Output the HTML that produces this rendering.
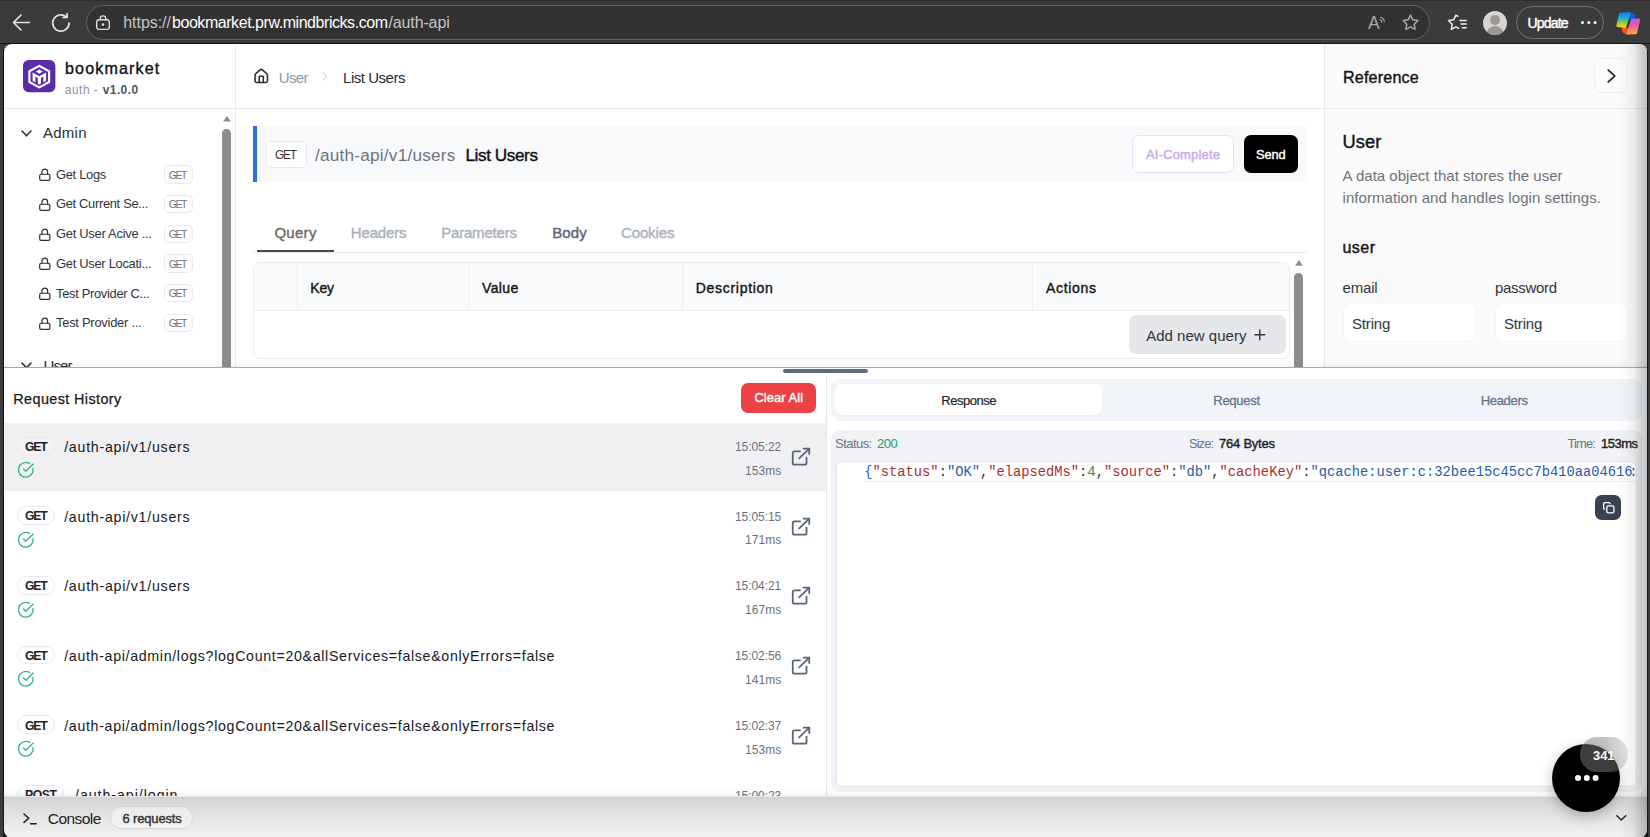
<!DOCTYPE html>
<html lang="en">
<head>
<meta charset="utf-8">
<title>bookmarket auth-api</title>
<style>
*{box-sizing:border-box;margin:0;padding:0}
html,body{width:1650px;height:837px;overflow:hidden;background:#3b3b3b}
body{position:relative;font-family:"Liberation Sans",sans-serif}
.layer{position:absolute;left:0;top:0;width:1650px;height:837px}
.b{position:absolute}
.t{position:absolute;white-space:pre;line-height:1;display:block}
.fs{font-family:"Liberation Sans",sans-serif}
.fm{font-family:"Liberation Mono",monospace}
svg{position:absolute;overflow:visible}
.ic{fill:none;stroke-linecap:round;stroke-linejoin:round}
#upper{clip-path:inset(44px 3px 470px 4px round 8px 8px 0 0)}
#lower{clip-path:inset(367px 3px 41px 4px)}
#bar{clip-path:inset(796.500px 3px -2px 4px round 0 0 10px 10px)}
</style>
</head>
<body>
<!-- ================= browser chrome ================= -->
<div class="layer" id="chrome">
  <div class="b" style="left:0;top:0;width:1650px;height:44px;background:#3b3b3b"></div>
  <div class="b" style="left:0;top:0;width:1650px;height:1.200px;background:#303030"></div>
  <div class="b" style="left:0;top:42.600px;width:1650px;height:1.600px;background:#141414"></div>
  <!-- url pill -->
  <div class="b" style="left:86px;top:5px;width:1344px;height:35px;border-radius:18px;background:#323232;border:1.500px solid #626262"></div>
  <!-- back arrow -->
  <svg class="ic" style="left:12px;top:13px" width="19" height="19" viewBox="0 0 19 19" stroke="#e6e6e6" stroke-width="1.6"><path d="M17.5 9.5H1.5M9 2 1.5 9.5 9 17"/></svg>
  <!-- refresh -->
  <svg class="ic" style="left:49.500px;top:11.800px" width="22" height="22" viewBox="0 0 21 21" stroke="#e6e6e6" stroke-width="1.6"><path d="M18.2 10.5a7.8 7.8 0 1 1-2.6-5.8"/><path d="M16.3 1.6v3.6h-3.6" /></svg>
  <!-- lock -->
  <svg class="ic" style="left:96px;top:14.800px" width="14" height="15" viewBox="0 0 14 15" stroke="#dcdcdc" stroke-width="1.350"><rect x=".7" y="4.700" width="12.600" height="9.600" rx="2.300"/><path d="M4.200 4.700V3.700a2.800 2.800 0 0 1 5.600 0V4.700"/><circle cx="7" cy="9.500" r=".700" fill="#dcdcdc"/></svg>
<span class="t fs" style="left:123.20px;top:15px;font-size:16px;color:#c4c4c4;letter-spacing:-0.033px;">https://</span>
<span class="t fs" style="left:172.00px;top:15px;font-size:16px;color:#ffffff;letter-spacing:-0.447px;">bookmarket.prw.mindbricks.com</span>
<span class="t fs" style="left:388.50px;top:15px;font-size:16px;color:#c4c4c4;letter-spacing:-0.133px;">/auth-api</span>
<span class="t fs" style="left:1527.50px;top:16px;font-size:14px;color:#ffffff;-webkit-text-stroke:0.4px currentColor;letter-spacing:-0.831px;">Update</span>
  <!-- read aloud A -->
  <span class="t fs" style="left:1368px;top:14.500px;font-size:17.500px;color:#a8a8a8">A</span>
  <svg class="ic" style="left:1378.500px;top:15.500px" width="8" height="9.600" viewBox="0 0 10 12" stroke="#a8a8a8" stroke-width="1.300"><path d="M1 4.500a3.500 3.500 0 0 1 2.500 3.200"/><path d="M2 1.500a6.500 6.500 0 0 1 4.700 5.800"/></svg>
  <!-- star -->
  <svg class="ic" style="left:1401px;top:13px" width="19" height="19" viewBox="0 0 24 24" stroke="#a8a8a8" stroke-width="1.900"><path d="M12 2.600l2.900 6 6.500.9-4.700 4.600 1.100 6.500L12 17.500l-5.800 3.100 1.100-6.500L2.600 9.500l6.500-.9z"/></svg>
  <!-- favourites -->
  <svg class="ic" style="left:1447px;top:13px" width="21" height="19" viewBox="0 0 26 24" stroke="#ededed" stroke-width="1.900"><path d="M13.500 4.200 11 2.600 8.100 8.600l-6.500.9 4.700 4.600-1.100 6.500L11 17.500l3.500 1.900"/><path d="M16 9.500h8M17.500 14h6.500M19 18.500h5"/></svg>
  <!-- avatar -->
  <div class="b" style="left:1483px;top:10.500px;width:24px;height:24px;border-radius:12px;background:#d8d4d0;overflow:hidden">
    <div class="b" style="left:7px;top:4px;width:10px;height:10px;border-radius:5px;background:#9b9792"></div>
    <div class="b" style="left:3px;top:15.500px;width:18px;height:14px;border-radius:9px 9px 0 0;background:#9b9792"></div>
  </div>
  <!-- update pill -->
  <div class="b" style="left:1516px;top:6px;width:88px;height:33px;border-radius:17px;border:1.600px solid #717171"></div>
  <div class="b" style="left:1580.500px;top:21px;width:3.200px;height:3.200px;border-radius:2px;background:#fff;box-shadow:6.300px 0 0 #fff,12.600px 0 0 #fff"></div>
  <!-- copilot -->
  <svg style="left:1615.500px;top:11.500px" width="24.650" height="22.950" viewBox="0 0 430 400">
    <defs>
      <linearGradient id="cg1" x1="0" y1="0" x2="0" y2="1"><stop offset="0" stop-color="#1583ee"/><stop offset=".3" stop-color="#1fa4d8"/><stop offset=".6" stop-color="#63c85a"/><stop offset="1" stop-color="#f7d416"/></linearGradient>
      <linearGradient id="cg2" x1="0" y1="0" x2="0" y2="1"><stop offset="0" stop-color="#b45cf5"/><stop offset=".4" stop-color="#f2569f"/><stop offset="1" stop-color="#ffa244"/></linearGradient>
    </defs>
    <g stroke-linejoin="round" stroke-width="44">
      <path d="M236 28 316 62 292 118 246 100z" fill="#0f5fe0" stroke="#0f5fe0"/>
      <path d="M122 296 196 300 196 372 140 352z" fill="#f2542c" stroke="#f2542c"/>
      <path d="M74 34 232 24 158 256 28 240z" fill="url(#cg1)" stroke="url(#cg1)"/>
      <path d="M282 138 400 136 346 366 206 372z" fill="url(#cg2)" stroke="url(#cg2)"/>
    </g>
  </svg>
</div>

<!-- ================= page ================= -->
<div class="b" style="left:1646px;top:50px;width:2px;height:787px;background:#161616"></div>
<div class="b" style="left:3px;top:50px;width:2px;height:787px;background:#161616"></div>
<div class="b" style="left:3px;top:43.500px;width:1645px;height:797px;background:#161616;border-radius:9px 9px 11px 11px"></div>
<div class="b" style="left:4px;top:44px;width:1643px;height:795px;background:#fff;border-radius:8px 8px 10px 10px"></div>

<div class="layer" id="upper">
  <!-- reference panel bg -->
  <div class="b" style="left:1324px;top:44px;width:323px;height:324px;background:#fafafa;border-left:1px solid #e7e8ea"></div>
  <!-- header bottom border -->
  <div class="b" style="left:4px;top:108px;width:1643px;height:1px;background:#e9eaec"></div>
  <!-- sidebar right border -->
  <div class="b" style="left:235px;top:44px;width:1px;height:324px;background:#e9eaec"></div>
  <!-- logo -->
  <svg style="left:22.600px;top:59.700px" width="32.400" height="32.200" viewBox="0 0 32.400 32.200">
    <rect width="32.400" height="32.200" rx="5.600" fill="#5a2ca8"/>
    <path d="M16.250 5.900 26.100 11.300V22L16.250 27.400 6.400 22V11.300z" fill="none" stroke="#fff" stroke-width="2.200" stroke-linejoin="round"/>
    <path d="M9.600 12.500 16.300 16.200 23.100 12.500V20.700L16.300 24.500 9.600 20.700z" fill="#fff"/>
    <path d="M12.400 16.500 14.800 17.900V24.500H12.400zM20.300 16.500 17.900 17.900V24.500H20.300z" fill="#5a2ca8"/>
    <path d="M16.300 9.400 19.800 11.550 16.300 13.700 12.900 11.550z" fill="#fff"/>
  </svg>
  <!-- home icon -->
  <svg class="ic" style="left:253px;top:67.500px" width="16.500" height="16.500" viewBox="0 0 24 24" stroke="#2b2f36" stroke-width="2.300"><path d="M15 21v-8a1 1 0 0 0-1-1h-4a1 1 0 0 0-1 1v8"/><path d="M3 10a2 2 0 0 1 .709-1.528l7-5.999a2 2 0 0 1 2.582 0l7 5.999A2 2 0 0 1 21 10v9a2 2 0 0 1-2 2H5a2 2 0 0 1-2-2z"/></svg>
  <!-- breadcrumb chevron -->
  <svg class="ic" style="left:321.900px;top:72.100px" width="5.800" height="9" viewBox="0 0 6 9" stroke="#dadde2" stroke-width="1.300"><path d="M1 .8 5 4.500 1 8.200"/></svg>
  <!-- reference collapse button -->
  <div class="b" style="left:1593.700px;top:57.800px;width:34.800px;height:35.600px;border-radius:7px;border:1px solid #eeeeef;background:#fbfbfb"></div>
  <svg class="ic" style="left:1606.700px;top:68.900px" width="9" height="14" viewBox="0 0 9 14" stroke="#333" stroke-width="1.700"><path d="M1.200 1 7.800 7 1.200 13"/></svg>

  <!-- sidebar -->
  <svg class="ic" style="left:20.500px;top:129.500px" width="11" height="7" viewBox="0 0 11 7" stroke="#2b2f36" stroke-width="1.600"><path d="M1 1 5.500 5.800 10 1"/></svg>
  <svg class="ic" style="left:20.500px;top:362px" width="11" height="7" viewBox="0 0 11 7" stroke="#2b2f36" stroke-width="1.600"><path d="M1 1 5.500 5.800 10 1"/></svg>
  <svg class="ic" style="left:38.450px;top:168.3px" width="13.600" height="13.600" viewBox="0 0 24 24" stroke="#2b2f36" stroke-width="2.100"><rect width="18" height="11" x="3" y="11" rx="2.500"/><path d="M7 11V7a5 5 0 0 1 10 0v4"/></svg>
  <div class="b" style="left:163.500px;top:165.1px;width:29.200px;height:18.500px;border-radius:5px;border:1px solid #e8eaed;background:#fff"></div>
  <svg class="ic" style="left:38.450px;top:198.0px" width="13.600" height="13.600" viewBox="0 0 24 24" stroke="#2b2f36" stroke-width="2.100"><rect width="18" height="11" x="3" y="11" rx="2.500"/><path d="M7 11V7a5 5 0 0 1 10 0v4"/></svg>
  <div class="b" style="left:163.500px;top:194.8px;width:29.200px;height:18.500px;border-radius:5px;border:1px solid #e8eaed;background:#fff"></div>
  <svg class="ic" style="left:38.450px;top:227.7px" width="13.600" height="13.600" viewBox="0 0 24 24" stroke="#2b2f36" stroke-width="2.100"><rect width="18" height="11" x="3" y="11" rx="2.500"/><path d="M7 11V7a5 5 0 0 1 10 0v4"/></svg>
  <div class="b" style="left:163.500px;top:224.5px;width:29.200px;height:18.500px;border-radius:5px;border:1px solid #e8eaed;background:#fff"></div>
  <svg class="ic" style="left:38.450px;top:257.4px" width="13.600" height="13.600" viewBox="0 0 24 24" stroke="#2b2f36" stroke-width="2.100"><rect width="18" height="11" x="3" y="11" rx="2.500"/><path d="M7 11V7a5 5 0 0 1 10 0v4"/></svg>
  <div class="b" style="left:163.500px;top:254.2px;width:29.200px;height:18.500px;border-radius:5px;border:1px solid #e8eaed;background:#fff"></div>
  <svg class="ic" style="left:38.450px;top:287.1px" width="13.600" height="13.600" viewBox="0 0 24 24" stroke="#2b2f36" stroke-width="2.100"><rect width="18" height="11" x="3" y="11" rx="2.500"/><path d="M7 11V7a5 5 0 0 1 10 0v4"/></svg>
  <div class="b" style="left:163.500px;top:283.9px;width:29.200px;height:18.500px;border-radius:5px;border:1px solid #e8eaed;background:#fff"></div>
  <svg class="ic" style="left:38.450px;top:316.8px" width="13.600" height="13.600" viewBox="0 0 24 24" stroke="#2b2f36" stroke-width="2.100"><rect width="18" height="11" x="3" y="11" rx="2.500"/><path d="M7 11V7a5 5 0 0 1 10 0v4"/></svg>
  <div class="b" style="left:163.500px;top:313.6px;width:29.200px;height:18.500px;border-radius:5px;border:1px solid #e8eaed;background:#fff"></div>
  <!-- sidebar scrollbar -->
  <svg style="left:222.500px;top:115.500px" width="8" height="5.500" viewBox="0 0 8 5.500"><path d="M4 0 8 5.500H0z" fill="#8f8f8f"/></svg>
  <div class="b" style="left:222.300px;top:128.500px;width:8.500px;height:250px;border-radius:4.250px;background:#8d8d8d"></div>

  <!-- request bar -->
  <div class="b" style="left:253px;top:126px;width:1054px;height:55.500px;background:#f8f9fb"></div>
  <div class="b" style="left:252.800px;top:126px;width:4.200px;height:55.500px;background:#2f6fdf"></div>
  <div class="b" style="left:266px;top:141px;width:40.700px;height:26.500px;border-radius:5px;background:#fff;border:1px solid #e8eaed"></div>
  <div class="b" style="left:1132px;top:135px;width:102px;height:37.500px;border-radius:7px;background:#fff;border:1.500px solid #e6defa"></div>
  <div class="b" style="left:1243.500px;top:135px;width:54.500px;height:37.500px;border-radius:7px;background:#000"></div>

  <!-- tabs -->
  <div class="b" style="left:253px;top:251.500px;width:1054px;height:1px;background:#e7e9ec"></div>
  <div class="b" style="left:257px;top:250px;width:76.500px;height:2.200px;background:#4a4a4a"></div>

  <!-- table -->
  <div class="b" style="left:253.300px;top:262px;width:1037px;height:96.500px;border:1px solid #e9ebee;border-radius:7px;background:#fff;overflow:hidden">
    <div class="b" style="left:0;top:0;width:1037px;height:47.500px;background:#f9fafb;border-bottom:1px solid #eceef1"></div>
    <div class="b" style="left:42.500px;top:0;width:1px;height:47.500px;background:#eceef1"></div>
    <div class="b" style="left:214px;top:0;width:1px;height:47.500px;background:#eceef1"></div>
    <div class="b" style="left:427.500px;top:0;width:1px;height:47.500px;background:#eceef1"></div>
    <div class="b" style="left:778px;top:0;width:1px;height:47.500px;background:#eceef1"></div>
  </div>
  <div class="b" style="left:1129px;top:315px;width:156.500px;height:39px;border-radius:7px;background:#e5e7eb"></div>
  <svg class="ic" style="left:1253.800px;top:329.300px" width="11.600" height="11.600" viewBox="0 0 13 13" stroke="#30343b" stroke-width="1.600"><path d="M1 6.500h11M6.500 1v11"/></svg>
  <!-- table scrollbar -->
  <svg style="left:1294.800px;top:259.800px" width="8" height="5.800" viewBox="0 0 8 5.800"><path d="M4 0 8 5.800H0z" fill="#8f8f8f"/></svg>
  <div class="b" style="left:1294px;top:273.300px;width:9px;height:110px;border-radius:4.500px;background:#8d8d8d"></div>

  <!-- reference inputs -->
  <div class="b" style="left:1342.500px;top:303px;width:133.500px;height:39px;border-radius:7px;background:#fff;border:1px solid #f5f5f6"></div>
  <div class="b" style="left:1495px;top:303px;width:133px;height:39px;border-radius:7px;background:#fff;border:1px solid #f5f5f6"></div>
<span class="t fs" style="left:65.00px;top:60px;font-size:16.1px;color:#141414;-webkit-text-stroke:0.4px currentColor;letter-spacing:1.134px;">bookmarket</span>
<span class="t fs" style="left:64.80px;top:85px;font-size:11.9px;color:#8b919b;letter-spacing:0.519px;">auth -</span>
<span class="t fs" style="left:102.80px;top:85px;font-size:11.9px;color:#4b5563;font-weight:700;letter-spacing:0.428px;">v1.0.0</span>
<span class="t fs" style="left:278.80px;top:70px;font-size:15px;color:#8e96a3;letter-spacing:-0.691px;">User</span>
<span class="t fs" style="left:343.00px;top:70px;font-size:15px;color:#1f2937;letter-spacing:-0.465px;">List Users</span>
<span class="t fs" style="left:1343.00px;top:69px;font-size:16.1px;color:#141414;-webkit-text-stroke:0.4px currentColor;letter-spacing:0.192px;">Reference</span>
<span class="t fs" style="left:43.00px;top:125px;font-size:15px;color:#2b2f36;letter-spacing:0.242px;">Admin</span>
<span class="t fs" style="left:56.00px;top:169px;font-size:12.9px;color:#2f343c;letter-spacing:-0.302px;">Get Logs</span>
<span class="t fs" style="left:168.80px;top:170px;font-size:10.5px;color:#6b7280;letter-spacing:-1.447px;">GET</span>
<span class="t fs" style="left:56.00px;top:198px;font-size:12.9px;color:#2f343c;letter-spacing:-0.315px;">Get Current Se...</span>
<span class="t fs" style="left:168.80px;top:199px;font-size:10.5px;color:#6b7280;letter-spacing:-1.447px;">GET</span>
<span class="t fs" style="left:56.00px;top:228px;font-size:12.9px;color:#2f343c;letter-spacing:-0.259px;">Get User Acive ...</span>
<span class="t fs" style="left:168.80px;top:229px;font-size:10.5px;color:#6b7280;letter-spacing:-1.447px;">GET</span>
<span class="t fs" style="left:56.00px;top:258px;font-size:12.9px;color:#2f343c;letter-spacing:-0.277px;">Get User Locati...</span>
<span class="t fs" style="left:168.80px;top:259px;font-size:10.5px;color:#6b7280;letter-spacing:-1.447px;">GET</span>
<span class="t fs" style="left:56.00px;top:288px;font-size:12.9px;color:#2f343c;letter-spacing:-0.303px;">Test Provider C...</span>
<span class="t fs" style="left:168.80px;top:288px;font-size:10.5px;color:#6b7280;letter-spacing:-1.447px;">GET</span>
<span class="t fs" style="left:56.00px;top:317px;font-size:12.9px;color:#2f343c;letter-spacing:-0.241px;">Test Provider ...</span>
<span class="t fs" style="left:168.80px;top:318px;font-size:10.5px;color:#6b7280;letter-spacing:-1.447px;">GET</span>
<span class="t fs" style="left:43.50px;top:358px;font-size:15px;color:#2b2f36;letter-spacing:-0.857px;">User</span>
<span class="t fs" style="left:275.00px;top:150px;font-size:11.9px;color:#333;letter-spacing:-1.227px;">GET</span>
<span class="t fs" style="left:315.00px;top:147px;font-size:17.2px;color:#6b7280;letter-spacing:0.216px;">/auth-api/v1/users</span>
<span class="t fs" style="left:465.50px;top:147px;font-size:17.2px;color:#111;-webkit-text-stroke:0.4px currentColor;letter-spacing:-0.434px;">List Users</span>
<span class="t fs" style="left:1146.00px;top:149px;font-size:12.9px;color:#c4a8ef;-webkit-text-stroke:0.4px currentColor;letter-spacing:0.234px;">AI-Complete</span>
<span class="t fs" style="left:1256.00px;top:149px;font-size:12.9px;color:#fff;-webkit-text-stroke:0.4px currentColor;letter-spacing:-0.170px;">Send</span>
<span class="t fs" style="left:274.40px;top:225px;font-size:15px;color:#6b6b6b;-webkit-text-stroke:0.4px currentColor;letter-spacing:0.285px;">Query</span>
<span class="t fs" style="left:350.80px;top:225px;font-size:15px;color:#a9b0bd;-webkit-text-stroke:0.4px currentColor;letter-spacing:-0.167px;">Headers</span>
<span class="t fs" style="left:441.20px;top:225px;font-size:15px;color:#a9b0bd;-webkit-text-stroke:0.4px currentColor;letter-spacing:-0.192px;">Parameters</span>
<span class="t fs" style="left:552.20px;top:225px;font-size:15px;color:#5b6578;-webkit-text-stroke:0.4px currentColor;letter-spacing:0.099px;">Body</span>
<span class="t fs" style="left:621.00px;top:225px;font-size:15px;color:#a9b0bd;-webkit-text-stroke:0.4px currentColor;letter-spacing:-0.134px;">Cookies</span>
<span class="t fs" style="left:310.30px;top:281px;font-size:14px;color:#141414;-webkit-text-stroke:0.4px currentColor;letter-spacing:-0.213px;">Key</span>
<span class="t fs" style="left:482.00px;top:281px;font-size:14px;color:#141414;-webkit-text-stroke:0.4px currentColor;letter-spacing:0.380px;">Value</span>
<span class="t fs" style="left:695.80px;top:281px;font-size:14px;color:#141414;-webkit-text-stroke:0.4px currentColor;letter-spacing:0.697px;">Description</span>
<span class="t fs" style="left:1046.00px;top:281px;font-size:14px;color:#141414;-webkit-text-stroke:0.4px currentColor;letter-spacing:0.680px;">Actions</span>
<span class="t fs" style="left:1146.20px;top:328px;font-size:15px;color:#30343b;letter-spacing:0.018px;">Add new query</span>
<span class="t fs" style="left:1342.50px;top:133px;font-size:18.3px;color:#141414;-webkit-text-stroke:0.4px currentColor;letter-spacing:0.064px;">User</span>
<span class="t fs" style="left:1342.50px;top:168px;font-size:15px;color:#6f7278;letter-spacing:0.024px;">A data object that stores the user</span>
<span class="t fs" style="left:1342.50px;top:190px;font-size:15px;color:#6f7278;letter-spacing:0.066px;">information and handles login settings.</span>
<span class="t fs" style="left:1342.50px;top:239px;font-size:16.1px;color:#141414;-webkit-text-stroke:0.4px currentColor;letter-spacing:0.396px;">user</span>
<span class="t fs" style="left:1342.50px;top:280px;font-size:15px;color:#2f343c;letter-spacing:-0.165px;">email</span>
<span class="t fs" style="left:1495.00px;top:280px;font-size:15px;color:#2f343c;letter-spacing:-0.315px;">password</span>
<span class="t fs" style="left:1352.00px;top:316px;font-size:15px;color:#2f343c;letter-spacing:-0.178px;">String</span>
<span class="t fs" style="left:1504.00px;top:316px;font-size:15px;color:#2f343c;letter-spacing:-0.157px;">String</span>
  <!-- shadow above split -->
  <div class="b" style="left:4px;top:360px;width:1643px;height:7px;background:linear-gradient(to bottom,rgba(0,0,0,0),rgba(0,0,0,.035))"></div>
</div>

<div class="layer" id="lower">
  <!-- split line -->
  <div class="b" style="left:4px;top:366.500px;width:1643px;height:1.500px;background:#a9abb0"></div>
  <div class="b" style="left:783px;top:369px;width:85px;height:3.500px;border-radius:2px;background:#5f6b7e"></div>
  <!-- vertical divider -->
  <div class="b" style="left:825.500px;top:375px;width:1px;height:421px;background:#e6e8eb"></div>
  <!-- clear all -->
  <div class="b" style="left:741.300px;top:383.200px;width:74.500px;height:29.600px;border-radius:7px;background:#ec4245"></div>
  <!-- rows -->
  <div class="b" style="left:4px;top:422.500px;width:821.500px;height:68.500px;background:#f0f0f2"></div>
  <div class="b" style="left:17px;top:436.6px;width:38.3px;height:18.800px;border-radius:9.400px;border:1px solid #ececee;background:#f3f3f5"></div>
  <svg class="ic" style="left:17.000px;top:461.2px" width="17.600" height="17.600" viewBox="0 0 24 24" stroke="#2fb588" stroke-width="1.800"><path d="M21.801 10A10 10 0 1 1 17 3.335"/><path d="m9 11 3 3L22 4"/></svg>
  <svg class="ic" style="left:789.700px;top:446.0px" width="22" height="21.400" viewBox="0 0 24 24" preserveAspectRatio="none" stroke="#56657c" stroke-width="1.950"><path d="M15 3h6v6"/><path d="M10 14 21 3"/><path d="M18 13v6a2 2 0 0 1-2 2H5a2 2 0 0 1-2-2V8a2 2 0 0 1 2-2h6"/></svg>
  <div class="b" style="left:17px;top:506.3px;width:38.3px;height:18.800px;border-radius:9.400px;border:1px solid #e9eaec;background:#fff"></div>
  <svg class="ic" style="left:17.000px;top:530.9px" width="17.600" height="17.600" viewBox="0 0 24 24" stroke="#2fb588" stroke-width="1.800"><path d="M21.801 10A10 10 0 1 1 17 3.335"/><path d="m9 11 3 3L22 4"/></svg>
  <svg class="ic" style="left:789.700px;top:515.7px" width="22" height="21.400" viewBox="0 0 24 24" preserveAspectRatio="none" stroke="#56657c" stroke-width="1.950"><path d="M15 3h6v6"/><path d="M10 14 21 3"/><path d="M18 13v6a2 2 0 0 1-2 2H5a2 2 0 0 1-2-2V8a2 2 0 0 1 2-2h6"/></svg>
  <div class="b" style="left:17px;top:576.0px;width:38.3px;height:18.800px;border-radius:9.400px;border:1px solid #e9eaec;background:#fff"></div>
  <svg class="ic" style="left:17.000px;top:600.6px" width="17.600" height="17.600" viewBox="0 0 24 24" stroke="#2fb588" stroke-width="1.800"><path d="M21.801 10A10 10 0 1 1 17 3.335"/><path d="m9 11 3 3L22 4"/></svg>
  <svg class="ic" style="left:789.700px;top:585.4px" width="22" height="21.400" viewBox="0 0 24 24" preserveAspectRatio="none" stroke="#56657c" stroke-width="1.950"><path d="M15 3h6v6"/><path d="M10 14 21 3"/><path d="M18 13v6a2 2 0 0 1-2 2H5a2 2 0 0 1-2-2V8a2 2 0 0 1 2-2h6"/></svg>
  <div class="b" style="left:17px;top:645.7px;width:38.3px;height:18.800px;border-radius:9.400px;border:1px solid #e9eaec;background:#fff"></div>
  <svg class="ic" style="left:17.000px;top:670.3px" width="17.600" height="17.600" viewBox="0 0 24 24" stroke="#2fb588" stroke-width="1.800"><path d="M21.801 10A10 10 0 1 1 17 3.335"/><path d="m9 11 3 3L22 4"/></svg>
  <svg class="ic" style="left:789.700px;top:655.1px" width="22" height="21.400" viewBox="0 0 24 24" preserveAspectRatio="none" stroke="#56657c" stroke-width="1.950"><path d="M15 3h6v6"/><path d="M10 14 21 3"/><path d="M18 13v6a2 2 0 0 1-2 2H5a2 2 0 0 1-2-2V8a2 2 0 0 1 2-2h6"/></svg>
  <div class="b" style="left:17px;top:715.4px;width:38.3px;height:18.800px;border-radius:9.400px;border:1px solid #e9eaec;background:#fff"></div>
  <svg class="ic" style="left:17.000px;top:740.0px" width="17.600" height="17.600" viewBox="0 0 24 24" stroke="#2fb588" stroke-width="1.800"><path d="M21.801 10A10 10 0 1 1 17 3.335"/><path d="m9 11 3 3L22 4"/></svg>
  <svg class="ic" style="left:789.700px;top:724.8px" width="22" height="21.400" viewBox="0 0 24 24" preserveAspectRatio="none" stroke="#56657c" stroke-width="1.950"><path d="M15 3h6v6"/><path d="M10 14 21 3"/><path d="M18 13v6a2 2 0 0 1-2 2H5a2 2 0 0 1-2-2V8a2 2 0 0 1 2-2h6"/></svg>
  <div class="b" style="left:17px;top:785.1px;width:47.2px;height:18.800px;border-radius:9.400px;border:1px solid #e9eaec;background:#fff"></div>
  <svg class="ic" style="left:17.000px;top:809.7px" width="17.600" height="17.600" viewBox="0 0 24 24" stroke="#2fb588" stroke-width="1.800"><path d="M21.801 10A10 10 0 1 1 17 3.335"/><path d="m9 11 3 3L22 4"/></svg>
  <svg class="ic" style="left:789.700px;top:794.5px" width="22" height="21.400" viewBox="0 0 24 24" preserveAspectRatio="none" stroke="#56657c" stroke-width="1.950"><path d="M15 3h6v6"/><path d="M10 14 21 3"/><path d="M18 13v6a2 2 0 0 1-2 2H5a2 2 0 0 1-2-2V8a2 2 0 0 1 2-2h6"/></svg>
  <!-- response tabs -->
  <div class="b" style="left:831.300px;top:379px;width:811px;height:42.300px;border-radius:9px;background:#f1f5f9"></div>
  <div class="b" style="left:834.700px;top:384.200px;width:267.600px;height:31px;border-radius:7px;background:#fff;box-shadow:0 1px 2px rgba(0,0,0,.04)"></div>
  <!-- status panel -->
  <div class="b" style="left:831.300px;top:430.200px;width:811px;height:361.500px;border-radius:9px;background:#f1f2f5"></div>
  <!-- editor -->
  <div class="b" style="left:836.100px;top:460.600px;width:801.300px;height:326.500px;border-radius:7px;background:#fffffe;border:1px solid #e3e6ec;overflow:hidden">
    <div class="b" style="left:26.900px;top:-0.500px;width:780px;height:21.200px;border-top:1.500px solid #ededee;border-bottom:1.500px solid #ededee;background:#fff"></div>
    <div class="code fm" style="position:absolute;left:27.200px;top:3.300px;white-space:pre;font-size:13.780px;line-height:16px;letter-spacing:0"><span style="color:#2c58e8">{</span><span style="color:#a53030">"status"</span><span style="color:#30343b">:</span><span style="color:#255caa">"OK"</span><span style="color:#30343b">,</span><span style="color:#a53030">"elapsedMs"</span><span style="color:#30343b">:</span><span style="color:#1b8c66">4</span><span style="color:#30343b">,</span><span style="color:#a53030">"source"</span><span style="color:#30343b">:</span><span style="color:#255caa">"db"</span><span style="color:#30343b">,</span><span style="color:#a53030">"cacheKey"</span><span style="color:#30343b">:</span><span style="color:#255caa">"qcache:user:c:32bee15c45cc7b410aa04616<span style="margin-left:-3.400px">:</span>1b2c"</span></div>
  </div>
  <!-- copy button -->
  <div class="b" style="left:1595px;top:494.800px;width:25.700px;height:25.400px;border-radius:6.500px;background:#3a4150"></div>
  <svg class="ic" style="left:1601.500px;top:501.200px" width="13" height="13" viewBox="0 0 24 24" stroke="#fff" stroke-width="2.400"><rect width="13" height="13" x="9" y="9" rx="2.500"/><path d="M5 15c-1.100 0-2-.9-2-2V5c0-1.100.9-2 2-2h8c1.100 0 2 .9 2 2"/></svg>
<span class="t fs" style="left:13.30px;top:392px;font-size:14.4px;color:#1a1a1a;-webkit-text-stroke:0.25px currentColor;letter-spacing:0.395px;">Request History</span>
<span class="t fs" style="left:754.40px;top:392px;font-size:12.9px;color:#fff;-webkit-text-stroke:0.4px currentColor;letter-spacing:0.075px;">Clear All</span>
<span class="t fs" style="left:24.90px;top:441px;font-size:12.2px;color:#1f2328;font-weight:700;letter-spacing:-1.181px;">GET</span>
<span class="t fs" style="left:64.20px;top:440px;font-size:14.2px;color:#16181d;letter-spacing:0.742px;">/auth-api/v1/users</span>
<span class="t fs" style="left:735.00px;top:441px;font-size:12px;color:#6b7280;letter-spacing:-0.060px;">15:05:22</span>
<span class="t fs" style="left:745.00px;top:465px;font-size:12px;color:#6b7280;letter-spacing:0.067px;">153ms</span>
<span class="t fs" style="left:24.90px;top:510px;font-size:12.2px;color:#1f2328;font-weight:700;letter-spacing:-1.181px;">GET</span>
<span class="t fs" style="left:64.20px;top:510px;font-size:14.2px;color:#16181d;letter-spacing:0.742px;">/auth-api/v1/users</span>
<span class="t fs" style="left:735.00px;top:511px;font-size:12px;color:#6b7280;letter-spacing:-0.060px;">15:05:15</span>
<span class="t fs" style="left:745.00px;top:534px;font-size:12px;color:#6b7280;letter-spacing:0.067px;">171ms</span>
<span class="t fs" style="left:24.90px;top:580px;font-size:12.2px;color:#1f2328;font-weight:700;letter-spacing:-1.181px;">GET</span>
<span class="t fs" style="left:64.20px;top:579px;font-size:14.2px;color:#16181d;letter-spacing:0.742px;">/auth-api/v1/users</span>
<span class="t fs" style="left:735.00px;top:580px;font-size:12px;color:#6b7280;letter-spacing:-0.060px;">15:04:21</span>
<span class="t fs" style="left:745.00px;top:604px;font-size:12px;color:#6b7280;letter-spacing:0.067px;">167ms</span>
<span class="t fs" style="left:24.90px;top:650px;font-size:12.2px;color:#1f2328;font-weight:700;letter-spacing:-1.181px;">GET</span>
<span class="t fs" style="left:64.20px;top:649px;font-size:14.2px;color:#16181d;letter-spacing:0.683px;">/auth-api/admin/logs?logCount=20&amp;allServices=false&amp;onlyErrors=false</span>
<span class="t fs" style="left:735.00px;top:650px;font-size:12px;color:#6b7280;letter-spacing:-0.060px;">15:02:56</span>
<span class="t fs" style="left:745.00px;top:674px;font-size:12px;color:#6b7280;letter-spacing:0.067px;">141ms</span>
<span class="t fs" style="left:24.90px;top:720px;font-size:12.2px;color:#1f2328;font-weight:700;letter-spacing:-1.181px;">GET</span>
<span class="t fs" style="left:64.20px;top:719px;font-size:14.2px;color:#16181d;letter-spacing:0.683px;">/auth-api/admin/logs?logCount=20&amp;allServices=false&amp;onlyErrors=false</span>
<span class="t fs" style="left:735.00px;top:720px;font-size:12px;color:#6b7280;letter-spacing:-0.060px;">15:02:37</span>
<span class="t fs" style="left:745.00px;top:744px;font-size:12px;color:#6b7280;letter-spacing:0.067px;">153ms</span>
<span class="t fs" style="left:24.90px;top:789px;font-size:12.2px;color:#1f2328;font-weight:700;letter-spacing:-0.362px;">POST</span>
<span class="t fs" style="left:75.00px;top:788px;font-size:14.2px;color:#16181d;letter-spacing:0.954px;">/auth-api/login</span>
<span class="t fs" style="left:735.00px;top:790px;font-size:12px;color:#6b7280;letter-spacing:-0.060px;">15:00:23</span>
<span class="t fs" style="left:752.00px;top:813px;font-size:12px;color:#6b7280;letter-spacing:-0.015px;">98ms</span>
<span class="t fs" style="left:941.30px;top:394px;font-size:13px;color:#1f2328;-webkit-text-stroke:0.2px currentColor;letter-spacing:-0.478px;">Response</span>
<span class="t fs" style="left:1213.30px;top:394px;font-size:13px;color:#64748b;-webkit-text-stroke:0.3px currentColor;letter-spacing:-0.287px;">Request</span>
<span class="t fs" style="left:1480.70px;top:394px;font-size:13px;color:#64748b;-webkit-text-stroke:0.3px currentColor;letter-spacing:-0.307px;">Headers</span>
<span class="t fs" style="left:835.00px;top:437px;font-size:13px;color:#6b7280;letter-spacing:-0.545px;">Status:</span>
<span class="t fs" style="left:877.00px;top:437px;font-size:13px;color:#22a06b;letter-spacing:-0.502px;">200</span>
<span class="t fs" style="left:1189.00px;top:437px;font-size:13px;color:#6b7280;letter-spacing:-0.977px;">Size:</span>
<span class="t fs" style="left:1219.00px;top:437px;font-size:13px;color:#1f2328;-webkit-text-stroke:0.4px currentColor;letter-spacing:-0.229px;">764 Bytes</span>
<span class="t fs" style="left:1567.40px;top:437px;font-size:13px;color:#6b7280;letter-spacing:-0.858px;">Time:</span>
<span class="t fs" style="left:1601.00px;top:437px;font-size:13px;color:#1f2328;-webkit-text-stroke:0.4px currentColor;letter-spacing:-0.508px;">153ms</span>
  <div class="b" style="left:4px;top:787px;width:1643px;height:10px;background:linear-gradient(to bottom,rgba(0,0,0,0),rgba(0,0,0,.012) 40%,rgba(0,0,0,.06))"></div>
</div>

<div class="layer" id="bar">
  <div class="b" style="left:4px;top:796px;width:1643px;height:43px;background:linear-gradient(to bottom,#cfcfcf 0,#d6d6d6 4px,#dedede 13px,#e8e8e8 27px,#f1f1f1 41px)"></div>
  <svg class="ic" style="left:23px;top:812.500px" width="14" height="11.500" viewBox="0 0 14 11.500" stroke="#222" stroke-width="1.500"><path d="M1 1 5.800 5.200 1 9.400M7.500 10.700h5.700"/></svg>
  <div class="b" style="left:110.300px;top:806.400px;width:83px;height:22.500px;border-radius:11.250px;border:1px solid #d6d6d6;background:rgba(255,255,255,.4)"></div>
  <svg class="ic" style="left:1616px;top:815.200px" width="10.500" height="6" viewBox="0 0 10.500 6" stroke="#222" stroke-width="1.500"><path d="M.8.800 5.250 5 9.700.8"/></svg>
<span class="t fs" style="left:47.80px;top:811px;font-size:15.5px;color:#222;letter-spacing:-0.562px;">Console</span>
<span class="t fs" style="left:122.40px;top:812px;font-size:13px;color:#333;-webkit-text-stroke:0.4px currentColor;letter-spacing:-0.145px;">6 requests</span>
</div>

<!-- ================= overlays ================= -->
<div class="layer" id="top">
  <!-- right edge shade -->
  <div class="b" style="left:1618px;top:44px;width:29px;height:795px;border-radius:0 8px 10px 0;background:linear-gradient(to right,rgba(0,0,0,0) 0,rgba(0,0,0,.025) 30%,rgba(0,0,0,.06) 55%,rgba(0,0,0,.16) 78%,rgba(0,0,0,.235) 100%)"></div>
  <!-- fab -->
  <div class="b" style="left:1552.300px;top:743.500px;width:68.200px;height:68.200px;border-radius:50%;background:#000;box-shadow:0 4px 14px rgba(0,0,0,.25)"></div>
  <div class="b" style="left:1580px;top:737.300px;width:47.600px;height:34.400px;border-radius:17.200px;background:linear-gradient(to right,rgba(125,125,125,.5) 0,rgba(130,130,130,.48) 50%,rgba(160,160,160,.3) 100%)"></div>
  <div class="b" style="left:1575px;top:775.200px;width:6px;height:6px;border-radius:3px;background:#fff;box-shadow:8.800px 0 0 #fff,17.600px 0 0 #fff"></div>
<span class="t fs" style="left:1593.00px;top:750px;font-size:12.9px;color:#fff;font-weight:700;letter-spacing:-0.008px;">341</span>
</div>
</body>
</html>
